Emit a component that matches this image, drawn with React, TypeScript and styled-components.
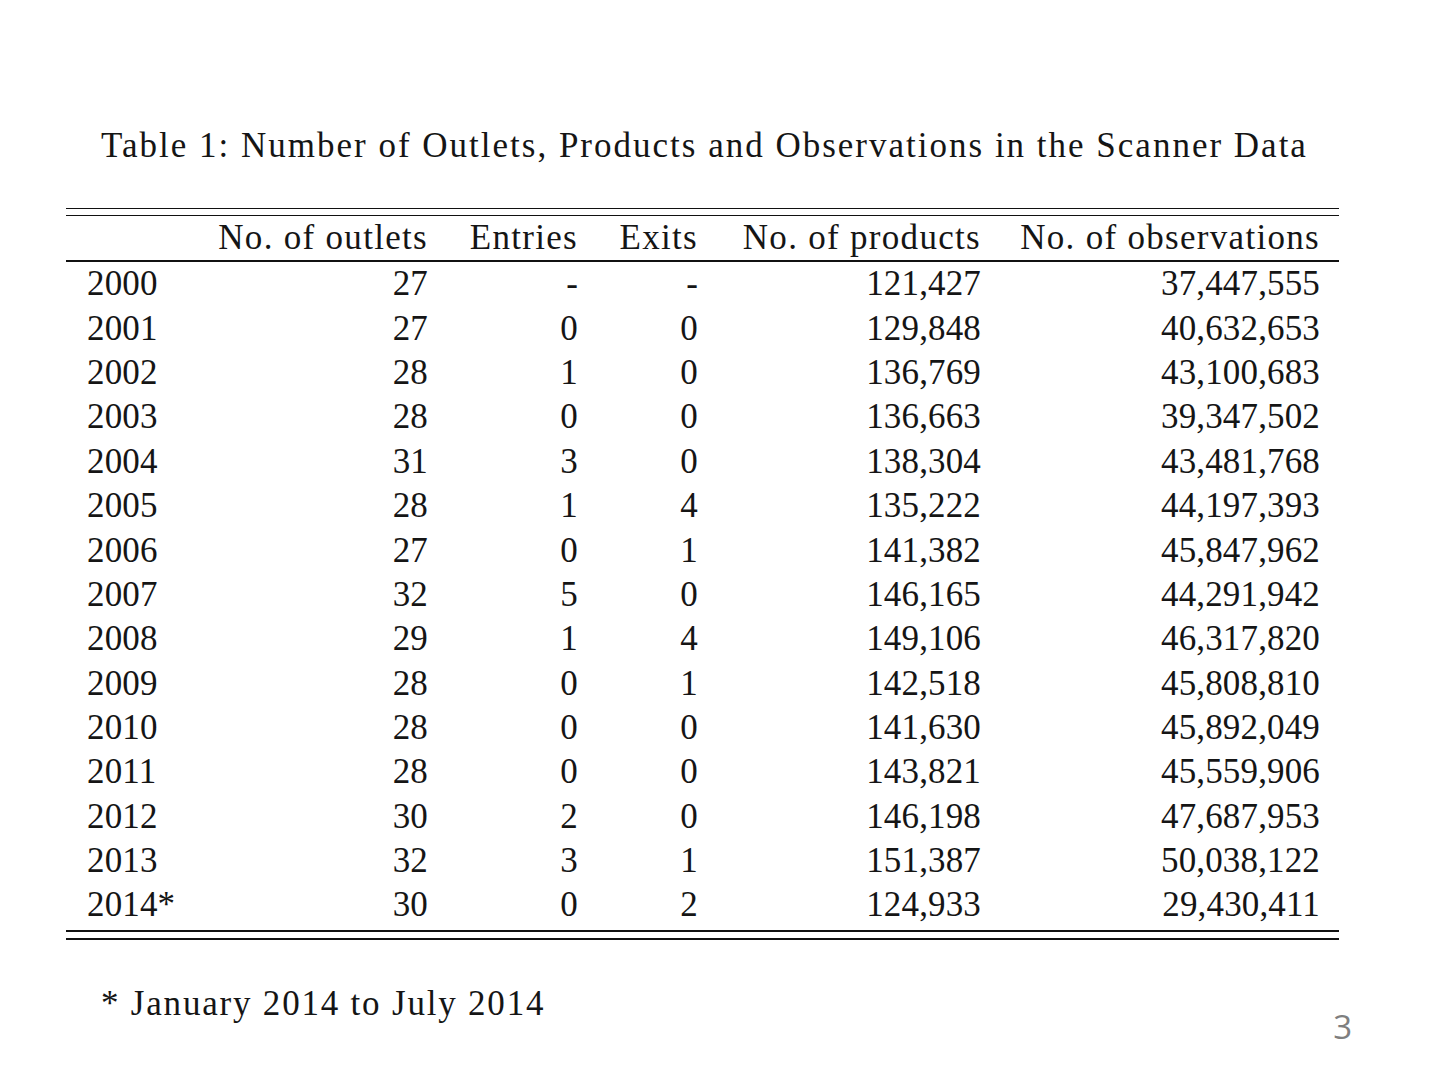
import React from "react";
import styled, { createGlobalStyle } from "styled-components";

const rows: [string, string, string, string, string, string][] = [
  ["2000", "27", "-", "-", "121,427", "37,447,555"],
  ["2001", "27", "0", "0", "129,848", "40,632,653"],
  ["2002", "28", "1", "0", "136,769", "43,100,683"],
  ["2003", "28", "0", "0", "136,663", "39,347,502"],
  ["2004", "31", "3", "0", "138,304", "43,481,768"],
  ["2005", "28", "1", "4", "135,222", "44,197,393"],
  ["2006", "27", "0", "1", "141,382", "45,847,962"],
  ["2007", "32", "5", "0", "146,165", "44,291,942"],
  ["2008", "29", "1", "4", "149,106", "46,317,820"],
  ["2009", "28", "0", "1", "142,518", "45,808,810"],
  ["2010", "28", "0", "0", "141,630", "45,892,049"],
  ["2011", "28", "0", "0", "143,821", "45,559,906"],
  ["2012", "30", "2", "0", "146,198", "47,687,953"],
  ["2013", "32", "3", "1", "151,387", "50,038,122"],
  ["2014*", "30", "0", "2", "124,933", "29,430,411"],
];

const headers = ["", "No. of outlets", "Entries", "Exits", "No. of products", "No. of observations"];

export default function App() {
  return (
    <Slide>
      <GlobalStyle />
      <Title>Table 1: Number of Outlets, Products and Observations in the Scanner Data</Title>
      <Table>
        <DoubleRule thin />
        <Row>
          {headers.map((h, i) => (
            <Cell key={i} first={i === 0} head>
              {h}
            </Cell>
          ))}
        </Row>
        <MidRule />
        {rows.map((r) => (
          <Row key={r[0]}>
            {r.map((c, i) => (
              <Cell key={i} first={i === 0}>
                {c}
              </Cell>
            ))}
          </Row>
        ))}
        <DoubleRule />
      </Table>
      <Footer>
        <Note>* January 2014 to July 2014</Note>
        <PageNum>3</PageNum>
      </Footer>
    </Slide>
  );
}

const GlobalStyle = createGlobalStyle`
  html, body {
    margin: 0;
    padding: 0;
    background: #fff;
  }
`;

const Slide = styled.div`
  width: 1440px;
  height: 1080px;
  box-sizing: border-box;
  padding: 124px 0 0 66px;
  display: flex;
  flex-direction: column;
  font-family: "Liberation Serif", "Times New Roman", serif;
  color: #151515;
`;

const Title = styled.div`
  font-size: 35px;
  line-height: 44px;
  margin-left: 35px;
  letter-spacing: 2px;
  white-space: nowrap;
`;

const Table = styled.div`
  width: 1273px;
  margin-top: 40px;
  display: flex;
  flex-direction: column;
`;

const DoubleRule = styled.div<{ thin?: boolean }>`
  box-sizing: content-box;
  height: 6px;
  border-top: ${(p) => (p.thin ? "1px" : "2px")} solid #111;
  border-bottom: ${(p) => (p.thin ? "1px" : "2px")} solid #111;
  margin-top: ${(p) => (p.thin ? "0" : "2px")};
`;

const MidRule = styled.div`
  border-top: 2px solid #111;
`;

const Row = styled.div`
  display: grid;
  grid-template-columns: 89px 213px 111px 81px 244px 300px;
  column-gap: 39px;
  padding: 0 19px 0 21px;
  height: 44.36px;
  line-height: 44.36px;
  font-size: 35px;
  white-space: nowrap;
`;

const Cell = styled.div<{ first?: boolean; head?: boolean }>`
  text-align: ${(p) => (p.first ? "left" : "right")};
  letter-spacing: ${(p) => (p.head ? "1.3px" : "0.15px")};
`;

const Footer = styled.div`
  display: flex;
  justify-content: space-between;
  align-items: flex-start;
  width: 1286px;
  margin-top: 42px;
`;

const Note = styled.div`
  font-size: 35px;
  line-height: 44px;
  margin-left: 35px;
  letter-spacing: 1.8px;
  white-space: nowrap;
`;

const PageNum = styled.div`
  font-family: "Open Sans", "Liberation Sans", sans-serif;
  font-size: 33px;
  line-height: 40px;
  color: #7f7f7f;
  margin-top: 25px;
`;
